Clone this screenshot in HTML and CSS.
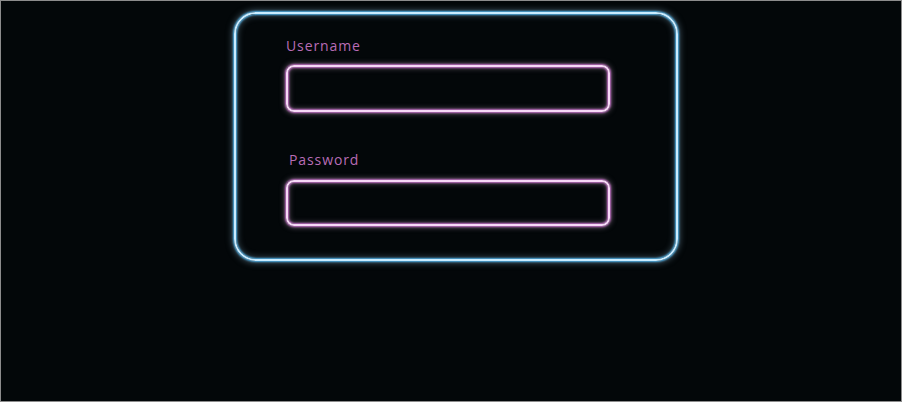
FILE: index.html
```html
<!DOCTYPE html>
<html>
<head>
<meta charset="utf-8">
<link rel="stylesheet" href="styles.css">
</head>
<body>
<div class="frame">
  <form class="card">
    <label class="label">Username</label>
    <div class="field"></div>
    <label class="label label-pass">Password</label>
    <div class="field field-pass"></div>
  </form>
</div>
</body>
</html>
```
FILE: styles.css
```css
* { box-sizing: border-box; }
html, body { margin: 0; padding: 0; }
body { background: #030709; }
.frame {
  width: 902px;
  height: 402px;
  border: 1px solid #8c8c8c;
  background: #030709;
  padding: 11px 0 0 233px;
}
.card {
  width: 444px;
  height: 249px;
  border: 2.5px solid #c9ecff;
  border-radius: 22px;
  box-shadow: 0 0 2px 1px #4fb0e6, 0 0 6px 2px rgba(120,150,170,0.5), inset 0 0 2px 1px #4fb0e6, inset 0 0 6px 2px rgba(120,150,170,0.4);
  padding: 23px 0 0 50px;
  display: flex;
  flex-direction: column;
  align-items: flex-start;
  font-family: "Open Sans", "DejaVu Sans", sans-serif;
}
.label {
  display: block;
  font-size: 14px;
  line-height: 17px;
  color: #b86cb6;
  letter-spacing: 0.9px;
}
.field {
  margin-top: 11px;
  width: 324px;
  height: 47px;
  border: 2px solid #f6d8f6;
  border-radius: 8px;
  box-shadow: 0 0 2px 1px #c06ec4, 0 0 5px 2px rgba(140,120,140,0.55), inset 0 0 2px 1px #c06ec4, inset 0 0 5px 2px rgba(140,120,140,0.45);
}
.label-pass {
  margin-top: 39px;
  padding-left: 3px;
}
.field-pass {
  margin-top: 12px;
  height: 46px;
}
```
